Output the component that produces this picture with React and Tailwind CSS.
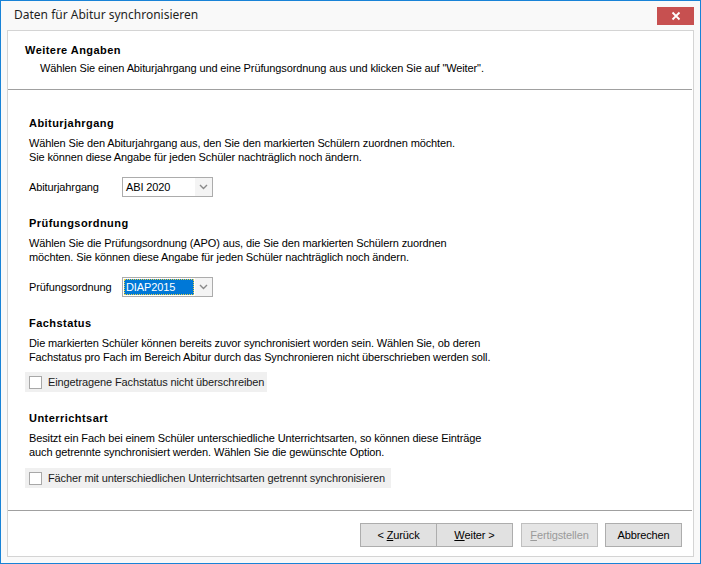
import React from "react";

const body = { fontFamily: '"Liberation Sans", Arial, sans-serif' };

function Combo({ value, selected }) {
  return (
    <div className="flex h-[20px] w-[91px] border border-[#acacac] bg-white">
      <div className="flex flex-1 items-center p-[1px]">
        {selected ? (
          <div className="flex h-full w-full items-center border border-dotted border-[#e8d34a] bg-[#0078d7] pl-[1px] text-white">
            {value}
          </div>
        ) : (
          <div className="pl-[2px] text-black">{value}</div>
        )}
      </div>
      <div className="flex w-[17px] items-center justify-center bg-[#f4f4f4]">
        <svg width="9" height="6" viewBox="0 0 9 6">
          <path d="M1 1 L4.5 4.5 L8 1" fill="none" stroke="#8a8a8a" strokeWidth="1.4" />
        </svg>
      </div>
    </div>
  );
}

function Check({ label, width }) {
  return (
    <div className={`ml-[-4px] flex h-[20px] items-center whitespace-nowrap bg-[#f0f0f0] ${width}`}>
      <div className="ml-[4px] h-[13px] w-[13px] shrink-0 border border-[#a8a8a8] bg-white" />
      <span className="ml-[6px] text-[#1a1a1a]">{label}</span>
    </div>
  );
}

function Btn({ children, disabled, className = "" }) {
  return (
    <div
      className={`flex h-[24px] w-[77px] items-center justify-center whitespace-pre border ${
        disabled ? "border-[#bfbfbf] bg-[#e5e5e5] text-[#9a9a9a]" : "border-[#adadad] bg-[#e1e1e1] text-black"
      } ${className}`}
    >
      {children}
    </div>
  );
}

const H = ({ children, className = "" }) => (
  <div className={`font-bold tracking-[0.45px] ${className}`}>{children}</div>
);

export default function App() {
  return (
    <div className="flex h-[564px] w-[701px] flex-col border border-[#1883d7] bg-[#f9f9f9]" style={body}>
      <div className="flex h-[29px] shrink-0 items-start justify-between">
        <div
          className="ml-[13px] mt-[5px] text-[12px] leading-[18px] text-[#1f1f1f]"
          style={{ fontFamily: '"Noto Sans", "Open Sans", sans-serif' }}
        >
          Daten für Abitur synchronisieren
        </div>
        <div className="mr-[6px] mt-[6px] flex h-[18px] w-[37px] items-center justify-center bg-[#c75050]">
          <svg width="10" height="10" viewBox="0 0 10 10">
            <path d="M1.5 1.5 L8.5 8.5 M8.5 1.5 L1.5 8.5" stroke="white" strokeWidth="1.8" />
          </svg>
        </div>
      </div>
      <div className="mx-[6px] mb-[6px] flex flex-1 flex-col border border-[#d4d4d4] bg-white text-[11px] leading-[14px] tracking-[-0.12px] text-black">
        <div className="pt-[12px] pb-[14px]">
          <H className="ml-[17px]">Weitere Angaben</H>
          <div className="ml-[32px] mt-[4px]">
            Wählen Sie einen Abiturjahrgang und eine Prüfungsordnung aus und klicken Sie auf "Weiter".
          </div>
        </div>
        <div className="mr-[1px] h-px bg-[#a0a0a0]" />
        <div className="flex flex-1 flex-col pl-[21px] pt-[26px]">
          <H>Abiturjahrgang</H>
          <div className="mt-[6px]">
            Wählen Sie den Abiturjahrgang aus, den Sie den markierten Schülern zuordnen möchten.
            <br />
            Sie können diese Angabe für jeden Schüler nachträglich noch ändern.
          </div>
          <div className="mt-[13px] flex items-center">
            <div className="w-[93px]">Abiturjahrgang</div>
            <Combo value="ABI 2020" />
          </div>

          <H className="mt-[19px]">Prüfungsordnung</H>
          <div className="mt-[6px]">
            Wählen Sie die Prüfungsordnung (APO) aus, die Sie den markierten Schülern zuordnen
            <br />
            möchten. Sie können diese Angabe für jeden Schüler nachträglich noch ändern.
          </div>
          <div className="mt-[13px] flex items-center">
            <div className="w-[93px]">Prüfungsordnung</div>
            <Combo value="DIAP2015" selected />
          </div>

          <H className="mt-[19px]">Fachstatus</H>
          <div className="mt-[6px]">
            Die markierten Schüler können bereits zuvor synchronisiert worden sein. Wählen Sie, ob deren
            <br />
            Fachstatus pro Fach im Bereich Abitur durch das Synchronieren nicht überschrieben werden soll.
          </div>
          <div className="mt-[8px]">
            <Check label="Eingetragene Fachstatus nicht überschreiben" width="w-[242px]" />
          </div>

          <H className="mt-[19px]">Unterrichtsart</H>
          <div className="mt-[6px]">
            Besitzt ein Fach bei einem Schüler unterschiedliche Unterrichtsarten, so können diese Einträge
            <br />
            auch getrennte synchronisiert werden. Wählen Sie die gewünschte Option.
          </div>
          <div className="mt-[9px]">
            <Check label="Fächer mit unterschiedlichen Unterrichtsarten getrennt synchronisieren" width="w-[366px]" />
          </div>
        </div>
        <div className="mr-[1px] h-px bg-[#a0a0a0]" />
        <div className="flex justify-end pr-[11px] pt-[12px] pb-[9px]">
          <Btn>
            {"< "}<span className="underline">Z</span>urück
          </Btn>
          <Btn className="ml-[-1px]">
            <span className="underline">W</span>{"eiter >"}
          </Btn>
          <Btn disabled className="ml-[8px]">
            <span className="underline">F</span>ertigstellen
          </Btn>
          <Btn className="ml-[7px]">Abbrechen</Btn>
        </div>
      </div>
    </div>
  );
}
